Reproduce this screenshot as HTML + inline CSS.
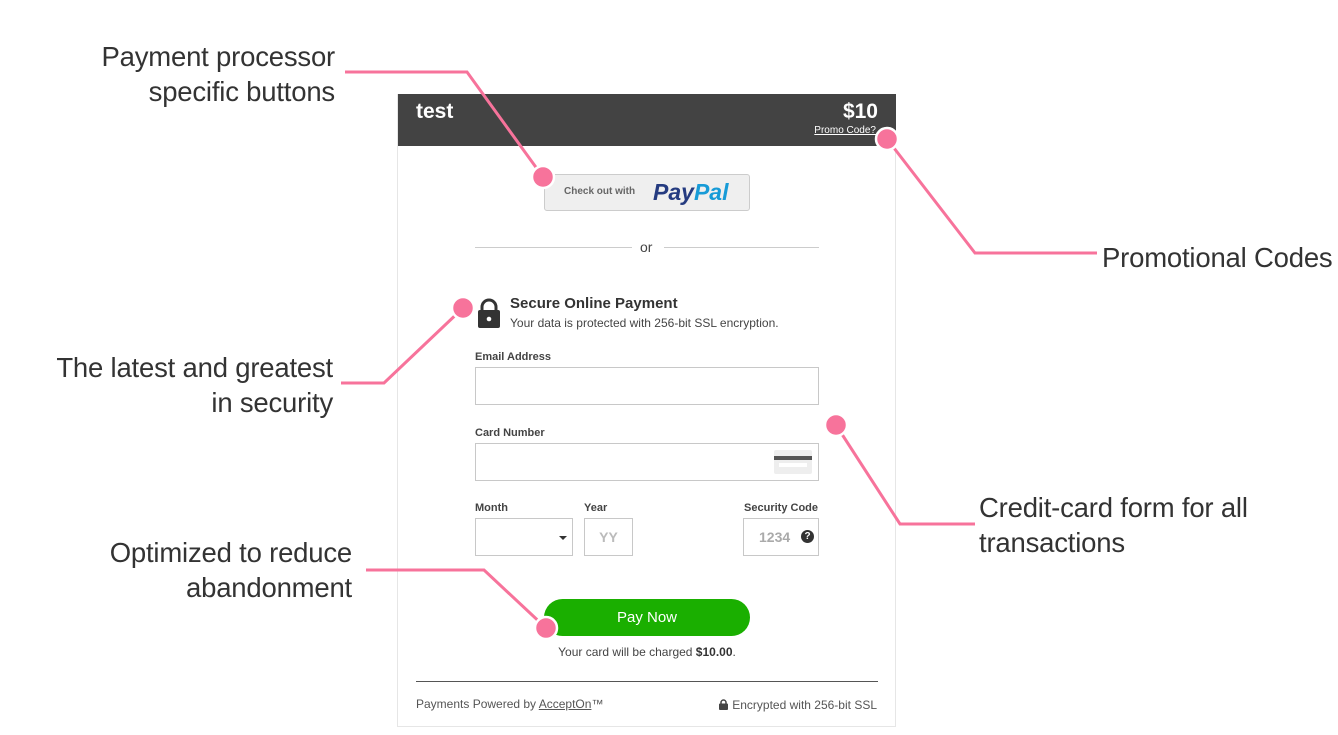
<!DOCTYPE html>
<html><head><meta charset="utf-8"><style>
*{margin:0;padding:0;box-sizing:border-box}
body{width:1338px;height:735px;background:#fff;position:relative;overflow:hidden;font-family:"Liberation Sans",Arial,sans-serif;color:#333}
.a{position:absolute;font-size:27.5px;color:#333;line-height:35px;letter-spacing:-0.2px;white-space:nowrap}
.card{position:absolute;left:397px;top:94px;width:499px;height:633px;border:1px solid #e6e6e6;border-top:none}
.hd{position:absolute;left:0;top:0;width:498px;height:52px;background:#434343;color:#fff}
.abs{position:absolute}
.lbl{position:absolute;font-size:11px;font-weight:bold;color:#444}
.inp{position:absolute;border:1px solid #c8c8c8;background:#fff}
</style></head><body>

<div class="a" style="right:1003px;top:39px;text-align:right">Payment processor<br>specific buttons</div>
<div class="a" style="right:1005px;top:350px;text-align:right">The latest and greatest<br>in security</div>
<div class="a" style="right:986px;top:535px;text-align:right">Optimized to reduce<br>abandonment</div>
<div class="a" style="left:1102px;top:240px">Promotional Codes</div>
<div class="a" style="left:979px;top:490px">Credit-card form for all<br>transactions</div>

<div class="card">
 <div class="hd">
  <div class="abs" style="left:18px;top:6px;font-size:21px;font-weight:bold">test</div>
  <div class="abs" style="right:18px;top:6px;font-size:21px;font-weight:bold">$10</div>
  <div class="abs" style="right:20px;top:31px;font-size:10px;text-decoration:underline">Promo Code?</div>
 </div>
 <div class="abs" style="left:146px;top:80px;width:206px;height:37px;background:#efefef;border:1px solid #ccc;border-radius:3px">
  <span class="abs" style="left:19px;top:11px;font-size:10px;font-weight:bold;color:#666">Check out with</span>
  <span class="abs" style="left:108px;top:4px;font-size:23px;font-weight:bold;font-style:italic;color:#253b80">Pay<span style="color:#179bd7">Pal</span></span>
 </div>
 <div class="abs" style="left:77px;top:153px;width:157px;height:1px;background:#ccc"></div>
 <div class="abs" style="left:266px;top:153px;width:155px;height:1px;background:#ccc"></div>
 <div class="abs" style="left:242px;top:145px;font-size:14px;color:#444">or</div>

 <svg class="abs" style="left:79px;top:204px" width="24" height="30" viewBox="0 0 24 30"><path d="M5 13V9a7 7 0 0 1 14 0v4" fill="none" stroke="#333" stroke-width="3"/><rect x="1" y="12" width="22" height="18" rx="2" fill="#333"/><circle cx="12" cy="21" r="2.3" fill="#fff"/></svg>
 <div class="abs" style="left:112px;top:201px;font-size:15px;font-weight:bold;color:#333">Secure Online Payment</div>
 <div class="abs" style="left:112px;top:222px;font-size:12px;color:#444">Your data is protected with 256-bit SSL encryption.</div>

 <div class="lbl" style="left:77px;top:257px">Email Address</div>
 <div class="inp" style="left:77px;top:273px;width:344px;height:38px"></div>
 <div class="lbl" style="left:77px;top:333px">Card Number</div>
 <div class="inp" style="left:77px;top:349px;width:344px;height:38px">
  <div class="abs" style="right:6px;top:6px;width:38px;height:24px;background:#eee;border-radius:2px">
   <div class="abs" style="left:0;top:6px;width:38px;height:4px;background:#555"></div>
   <div class="abs" style="left:5px;top:13px;width:28px;height:4px;background:#fff"></div>
  </div>
 </div>
 <div class="lbl" style="left:77px;top:408px">Month</div>
 <div class="lbl" style="left:186px;top:408px">Year</div>
 <div class="lbl" style="right:77px;top:408px">Security Code</div>
 <div class="inp" style="left:77px;top:424px;width:98px;height:38px"><div class="abs" style="right:5px;top:17px;border:4px solid transparent;border-top:4px solid #333"></div></div>
 <div class="inp" style="left:186px;top:424px;width:49px;height:38px;text-align:center;line-height:36px;color:#bbb;font-size:14px;font-weight:bold">YY</div>
 <div class="inp" style="left:345px;top:424px;width:76px;height:38px"><span class="abs" style="left:15px;top:10px;color:#aaa;font-size:14px;font-weight:bold">1234</span><span class="abs" style="left:57px;top:11px;width:13px;height:13px;border-radius:50%;background:#333;color:#fff;font-size:10px;font-weight:bold;text-align:center;line-height:13px">?</span></div>

 <div class="abs" style="left:146px;top:505px;width:206px;height:37px;background:#1aaf00;border-radius:19px;color:#fff;font-size:15px;text-align:center;line-height:37px">Pay Now</div>
 <div class="abs" style="left:0;width:498px;top:551px;text-align:center;font-size:12px;color:#444">Your card will be charged <b style="color:#333">$10.00</b>.</div>
 <div class="abs" style="left:18px;top:587px;width:462px;height:1px;background:#555"></div>
 <div class="abs" style="left:18px;top:603px;font-size:12px;color:#555">Payments Powered by <u>AcceptOn</u>™</div>
 <div class="abs" style="right:18px;top:604px;font-size:12px;color:#555"><svg width="9" height="11" viewBox="0 0 9 11" style="vertical-align:-1px;margin-right:4px"><path d="M2 5V3.5a2.5 2.5 0 0 1 5 0V5" fill="none" stroke="#444" stroke-width="1.5"/><rect x="0" y="4.5" width="9" height="6.5" rx="1" fill="#444"/></svg>Encrypted with 256-bit SSL</div>
</div>

<svg class="abs" style="left:0;top:0" width="1338" height="735">
 <g fill="none" stroke="#f7739b" stroke-width="3">
  <polyline points="345,72 467,72 543,177"/>
  <polyline points="887,139 975,253 1097,253"/>
  <polyline points="463,308 384,383 341,383"/>
  <polyline points="836,425 900,524 975,524"/>
  <polyline points="366,570 484,570 546,628"/>
 </g>
 <g fill="#f7739b" stroke="#fff" stroke-width="2.5">
  <circle cx="543" cy="177" r="11"/>
  <circle cx="887" cy="139" r="11"/>
  <circle cx="463" cy="308" r="11"/>
  <circle cx="836" cy="425" r="11"/>
  <circle cx="546" cy="628" r="11"/>
 </g>
</svg>
</body></html>
